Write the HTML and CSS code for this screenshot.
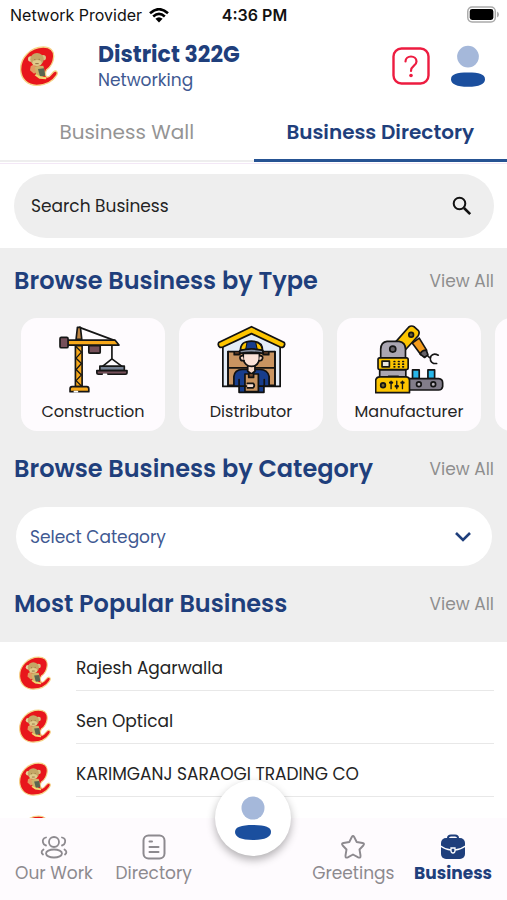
FILE: index.html
```html
<!DOCTYPE html>
<html lang="en">
<head>
<meta charset="utf-8">
<meta name="viewport" content="width=device-width, initial-scale=1">
<title>Business Directory</title>
<link rel="stylesheet" href="styles.css">
</head>
<body>
<svg class="defs" aria-hidden="true">
  <symbol id="logo" viewBox="12 14 114 122">
    <path d="M14 88C12 50 44 18 82 18C102 18 114 28 113 47C112 64 103 78 92 86C88 92 86 106 94 108C103 110 108 92 117 90C124 89 126 97 121 104C110 121 88 133 62 133C34 133 16 114 14 88Z" fill="#e8161c" stroke="#f5d588" stroke-width="4"/>
    <path d="M54 70L44 76L42 88L54 98L64 92" fill="#e39a62"/>
    <path d="M56 76L82 74L88 98L78 108L60 102Z" fill="#cdb46b"/>
    <path d="M66 84L84 82L88 104L72 107Z" fill="#5a6650"/>
    <path d="M56 103L70 113L90 115L92 109L74 106L60 100Z" fill="#f0da70"/>
    <circle cx="44" cy="54" r="8" fill="#e6d49c"/><circle cx="82" cy="50" r="8" fill="#d9c286"/>
    <ellipse cx="63" cy="55" rx="20" ry="19" fill="#c4a766"/>
    <ellipse cx="63" cy="66" rx="14" ry="9" fill="#dfcb8c"/>
    <path d="M55 56H58M68 55H71M58 68H68" stroke="#8a6a3c" stroke-width="3" fill="none"/>
  </symbol>
  <symbol id="person" viewBox="0 0 36 44">
    <circle cx="18" cy="12" r="11.5" fill="#a5b8da"/>
    <path d="M0 36C0 31 6 29 18 29S36 31 36 36S30 44 18 44S0 41 0 36Z" fill="#1b4f9e"/>
  </symbol>
</svg>
<div class="app">
  <div class="status">
    <div class="carrier"><span>Network Provider</span>
      <svg class="wifi" viewBox="0 0 20 15"><path d="M1 5.2Q10-2.8 19 5.2M4.2 8.5Q10 3.3 15.8 8.5" fill="none" stroke="#000" stroke-width="2.6"/><path d="M6.4 10.7Q10 7.6 13.6 10.7L10 14.5Z"/></svg>
    </div>
    <span class="time">4:36 PM</span>
    <svg class="battery" viewBox="0 0 33 17"><rect x=".8" y=".8" width="28.4" height="15.4" rx="4.5" fill="#fff" stroke="#aaa" stroke-width="1.5"/><rect x="2.8" y="2.8" width="24.4" height="11.4" rx="2.5"/><path d="M31 5.5Q33 6.5 33 8.5T31 11.5Z" fill="#aaa"/></svg>
  </div>
  <header class="header">
    <svg class="logo"><use href="#logo"/></svg>
    <div class="titles"><h1>District 322G</h1><p>Networking</p></div>
    <button class="icon-button" type="button" aria-label="Help">
      <svg class="help" viewBox="0 0 38 38"><rect x="1.5" y="1.5" width="35" height="35" rx="8" fill="none" stroke="#ed1c40" stroke-width="2.4"/><path d="M13.5 14.5C13.5 7.8 24.5 7.8 24.5 14.5C24.5 19 19 18.5 19 24" fill="none" stroke="#ed1c40" stroke-width="2.2" stroke-linecap="round"/><circle cx="19" cy="28.5" r="1.8" fill="#ed1c40"/></svg>
    </button>
    <button class="icon-button" type="button" aria-label="Profile"><svg class="profile"><use href="#person"/></svg></button>
  </header>
  <nav class="tabs" aria-label="Business views">
    <a href="#wall">Business Wall</a>
    <a href="#directory" class="active" aria-current="page">Business Directory</a>
  </nav>
  <form class="search">
    <input type="search" placeholder="Search Business" aria-label="Search Business">
    <button class="icon-button" type="submit" aria-label="Search"><svg class="search-icon" viewBox="0 0 20 20"><circle cx="7.5" cy="7.5" r="5.8" fill="none" stroke="#111" stroke-width="2"/><path d="M12 12L18.2 18.2" stroke="#111" stroke-width="2.6"/></svg></button>
  </form>
  <main>
    <div class="browse">
      <div class="section-head"><h2>Browse Business by Type</h2><a href="#types">View All</a></div>
      <div class="types">
        <a class="type" href="#construction">
          <svg viewBox="145 45 206 206" stroke="#161616" stroke-width="5" stroke-linejoin="round" stroke-linecap="round">
            <path d="M206 52L310 91M303 105V146M303 146L276 168M303 146L332 168" fill="none"/>
            <path d="M196 88L200 52H209L213 88Z" fill="#bd8442"/>
            <path d="M194 107H214V229H194Z" fill="#f7a81b"/>
            <path d="M196 110L212 126L196 144L212 160L196 178L212 194L196 211L212 227" fill="none" stroke-width="4"/>
            <path d="M171 90H312L324 105H171Z" fill="#f7a81b"/>
            <rect x="148" y="82" width="24" height="31" rx="4" fill="#76505a"/>
            <path d="M234 107H268V126Q268 129 264 129H238Q234 129 234 126Z" fill="#76505a"/>
            <path d="M184 229H228Q234 229 234 236V244H178V236Q178 229 184 229Z" fill="#f7a81b"/>
            <path d="M267 168H340V181H267Z" fill="#758092"/><path d="M258 181H348V187Q348 192 343 192H263Q258 192 258 187Z" fill="#76505a"/>
            <path d="M191 244H200M278 192H287" stroke="#fff"/>
          </svg><span>Construction</span></a>
        <a class="type" href="#distributor">
          <svg viewBox="142 48 200 200" stroke="#111" stroke-width="5" stroke-linejoin="round" stroke-linecap="round">
            <path d="M159 105L242 65L325 105V226H159Z" fill="#e4edf8"/>
            <path d="M174 125H310V223H174Z" fill="#c99461"/><path d="M174 172H310M174 125V223M310 125V223" fill="none"/>
            <path d="M192 126V134H208V126M276 126V134H292V126" fill="#5b3924"/>
            <path d="M242 53L337 99Q341 108 332 113L325 112L242 73L159 112L151 113Q143 108 147 99Z" fill="#fdc500"/>
            <path d="M191 225V197Q193 178 215 177H267Q289 178 293 197V225H278V243H206V225Z" fill="#173d8d"/>
            <path d="M231 161H252V182L242 190L231 182Z" fill="#f7d7c4"/>
            <path d="M218 130H265V148Q260 168 242 168T218 148Z" fill="#fae2d7"/>
            <path d="M217 137Q207 137 209 145T220 151M266 137Q276 137 274 145T264 151" fill="#f7d7c4"/>
            <path d="M210 122Q210 95 242 95T274 122Z" fill="#173d8d"/>
            <path d="M211 120Q212 99 229 98L225 120ZM254 98Q272 103 273 120H259Z" fill="#fdc500" stroke-width="3"/>
            <path d="M208 122Q242 113 275 122V130Q242 125 208 130Z" fill="#8790a0"/>
            <path d="M223 190H262V241H223Z" fill="#c99461"/><path d="M234 190V200H248V190" fill="#6e452a"/>
            <path d="M230 217H247Q253 223 247 230H230" fill="#f9ded0"/><path d="M206 206V225H227M279 206V225H263" fill="none"/>
          </svg><span>Distributor</span></a>
        <a class="type" href="#manufacturer">
          <svg viewBox="135 45 206 206" stroke="#151515" stroke-width="5" stroke-linejoin="round" stroke-linecap="round">
            <path d="M246 99L267 84L289 120L272 134Z" fill="#f49b1c"/>
            <path d="M198 94L236 51Q244 45 253 51L263 60Q270 67 264 77L226 119Z" fill="#fdc500"/>
            <circle cx="243" cy="74" r="7" fill="#675d36"/>
            <path d="M270 132Q274 120 288 120L293 134L283 142Z" fill="#656166"/>
            <path d="M293 138L300 144M324 135Q309 127 302 138Q296 153 310 160L319 160" fill="none"/>
            <path d="M152 144V117Q153 96 171 94H207Q226 97 226 117V144Z" fill="#aaa6b2"/>
            <circle cx="188" cy="117" r="9" fill="#656166"/>
            <path d="M149 178H227V200H149Z" fill="#aaa6b2"/><path d="M175 197H205" stroke-width="3"/>
            <rect x="144" y="143" width="90" height="35" rx="5" fill="#fdc500"/><rect x="156" y="153" width="22" height="17" fill="#e9e6df"/>
            <path d="M192 154H194M205 154H207M218 154H220M192 162H194M205 162H207M218 162H220M192 170H194M205 170H207M218 170H220"/>
            <path d="M247 179H267V205H247ZM293 179H313V205H293Z" fill="#28b7e9"/>
            <path d="M237 205H325Q337 206 337 218V229Q335 239 325 239H237Z" fill="#827d8a"/>
            <circle cx="266" cy="222" r="7" fill="#bbb6be"/><circle cx="309" cy="222" r="7" fill="#bbb6be"/>
            <path d="M137 247V210Q139 200 150 200H229Q238 201 238 211V247Z" fill="#fdc500"/>
            <circle cx="159" cy="225" r="7" fill="#7c6823"/><path d="M183 213V235M200 213V235M217 213V235" stroke-width="4"/><path d="M180 217H186M197 228H203M214 217H220" stroke-width="7"/>
          </svg><span>Manufacturer</span></a>
        <div class="type" aria-hidden="true"></div>
      </div>
      <div class="section-head"><h2>Browse Business by Category</h2><a href="#categories">View All</a></div>
      <div class="category">
        <select aria-label="Category"><option>Select Category</option></select>
        <svg class="chevron" viewBox="0 0 18 12"><path d="M2 2L9 9L16 2" fill="none" stroke="#1f3f7c" stroke-width="2.6"/></svg>
      </div>
      <div class="section-head last"><h2>Most Popular Business</h2><a href="#popular">View All</a></div>
    </div>
    <ul class="list">
      <li><svg><use href="#logo"/></svg><span>Rajesh Agarwalla</span></li>
      <li><svg><use href="#logo"/></svg><span>Sen Optical</span></li>
      <li><svg><use href="#logo"/></svg><span>KARIMGANJ SARAOGI TRADING CO</span></li>
      <li><svg><use href="#logo"/></svg><span></span></li>
    </ul>
  </main>
  <nav class="bottom" aria-label="Main">
    <a href="#work"><svg viewBox="0 0 28 26" fill="none" stroke="#8d8a8f" stroke-width="1.8" stroke-linecap="round"><circle cx="14" cy="8" r="5"/><ellipse cx="14" cy="19.5" rx="8" ry="4"/><path d="M6 3.5Q2 4.5 3 8.5Q3.5 11 6 11.5M22 3.5Q26 4.5 25 8.5Q24.5 11 22 11.5M3.5 15.5Q0 18 3 20.5M24.5 15.5Q28 18 25 20.5"/></svg><span>Our Work</span></a>
    <a href="#listing"><svg viewBox="0 0 28 26" fill="none" stroke="#8d8a8f" stroke-width="2" stroke-linecap="round"><rect x="3.5" y="1.5" width="21" height="23" rx="5"/><path d="M9.5 7.5H12M9.5 13H18.5M9.5 18H18.5"/></svg><span>Directory</span></a>
    <button class="fab" type="button" aria-label="My profile"><svg><use href="#person"/></svg></button>
    <a href="#greetings"><svg viewBox="0 0 28 26" fill="none" stroke="#8d8a8f" stroke-width="1.9" stroke-linejoin="round"><path d="M12.8 3Q14 1 15.2 3L17.7 8L23.5 9Q26 9.5 24.3 11.5L20.5 15.5L21.5 21.5Q21.8 24.5 19.2 23.3L14 20.5L8.8 23.3Q6.2 24.5 6.5 21.5L7.5 15.5L3.7 11.5Q2 9.5 4.5 9L10.3 8Z"/></svg><span>Greetings</span></a>
    <a href="#business" class="active"><svg viewBox="0 0 28 26"><path d="M9 6V4Q9 1.5 12 1.5H16Q19 1.5 19 4V6" fill="none" stroke="#1f3f7c" stroke-width="2"/><rect x="2" y="4" width="24" height="21" rx="5" fill="#1f3f7c"/><path d="M1.500 12Q6 15.500 12 16M26.500 12Q22 15.500 16 16" fill="none" stroke="#fff" stroke-width="1.5"/><path d="M12 14H16V16.500Q16 19 14 19T12 16.500Z" fill="#1f3f7c" stroke="#fff" stroke-width="1.3"/></svg><span>Business</span></a>
  </nav>
</div>
</body>
</html>
```
FILE: styles.css
```css
* { box-sizing: border-box; }
body, h1, h2, p, ul { margin: 0; padding: 0; }
body { font-family: Poppins, Inter, "Open Sans", sans-serif; font-size: 17px; color: #242424; background: #fff; }
a { color: inherit; text-decoration: none; }
button, input, select { font: inherit; border: 0; background: none; padding: 0; }
svg { display: block; }
.defs { position: absolute; width: 0; height: 0; }
.app { height: 100vh; display: flex; flex-direction: column; overflow: hidden; }
.app > * { flex-shrink: 0; }

.status { display: grid; grid-template-columns: 1fr auto 1fr; align-items: center; height: 30px; padding: 0 8px 0 10px; font-family: Inter, "Liberation Sans", sans-serif; font-size: 16px; color: #111; }
.carrier { display: flex; align-items: center; gap: 7px; white-space: nowrap; }
.wifi { width: 20px; height: 15px; }
.time { font-weight: 600; }
.battery { width: 32px; height: 17px; justify-self: end; margin-bottom: 2px; }

.header { display: flex; align-items: center; height: 72px; padding: 0 22px 0 20px; }
.logo { width: 38px; height: 42px; }
.titles { flex: 1; margin-left: 40px; color: #1f3f7c; }
h1 { font-size: 22px; line-height: 28px; font-weight: 700; }
.titles p { font-size: 17px; line-height: 22px; color: #405992; }
.icon-button { display: grid; place-items: center; }
.help { width: 38px; height: 38px; }
.profile { width: 34px; height: 42px; margin-left: 21px; }

.tabs { display: flex; height: 62px; padding-top: 2px; border-bottom: 1px solid #f3e8f6; font-size: 20px; }
.tabs a { flex: 1; display: grid; place-items: center; height: 58px; color: #949494; border-bottom: 2px solid #eee; }
.tabs .active { color: #1f3f7c; font-weight: 600; border-bottom: 3px solid #265393; }

.search { display: flex; align-items: center; height: 64px; margin: 10px 13px 10px 14px; padding: 0 22px 0 17px; border-radius: 32px; background: #eee; }
.search input { flex: 1; min-width: 0; outline: 0; appearance: none; font-size: 17px; }
.search input::placeholder { color: #242424; opacity: 1; }
.search-icon { width: 20px; height: 20px; }

main { flex: 1 1 0; min-height: 0; overflow: hidden; }
.browse { background: #eee; padding-top: 17px; }
.section-head { display: flex; align-items: center; justify-content: space-between; height: 32px; padding: 0 13px 0 14px; }
h2 { font-size: 24px; line-height: 32px; font-weight: 600; color: #1f3f7c; }
.section-head a { font-size: 17px; color: #8e8e8e; }
.types { display: flex; gap: 14px; overflow: hidden; padding: 21px 0 22px 21px; }
.type { flex: 0 0 144px; height: 113px; display: flex; flex-direction: column; align-items: center; padding-top: 7px; border-radius: 16px; background: #fefbfe; font-size: 16px; }
.type svg { width: 69px; height: 69px; }
.type span { margin-top: 6px; line-height: 24px; }
.category { position: relative; margin: 22px 15px 22px 16px; }
.category select { width: 100%; height: 59px; padding: 0 14px; border-radius: 30px; background: #fff; color: #405992; appearance: none; display: block; }
.chevron { position: absolute; right: 20px; top: 24px; width: 18px; height: 12px; pointer-events: none; }
.last { height: 54px; padding-bottom: 22px; }

.list { list-style: none; }
.list li { display: flex; height: 49px; margin-bottom: 4px; padding: 0 13px 0 19px; }
.list svg { width: 32px; height: 34px; margin-top: 14px; }
.list span { flex: 1; margin-left: 25px; padding-top: 14px; line-height: 24px; border-bottom: 1px solid #e8e8e8; }

.bottom { position: relative; display: grid; grid-template-columns: 1fr 1fr 1fr 1fr 1fr; height: 82px; padding: 0 4px; background: #fefbfe; color: #8d8a8f; font-size: 17px; }
.bottom a { display: flex; flex-direction: column; align-items: center; padding-top: 16px; white-space: nowrap; }
.bottom a svg { width: 28px; height: 26px; }
.bottom a span { line-height: 26px; }
.bottom .active { color: #1f3f7c; font-weight: 700; }
.fab { width: 76px; height: 76px; margin-top: -38px; justify-self: center; display: grid; place-items: center; border-radius: 50%; background: #fff; box-shadow: 0 4px 8px rgba(0, 0, 0, .3); }
.fab svg { width: 36px; height: 44px; }
```
